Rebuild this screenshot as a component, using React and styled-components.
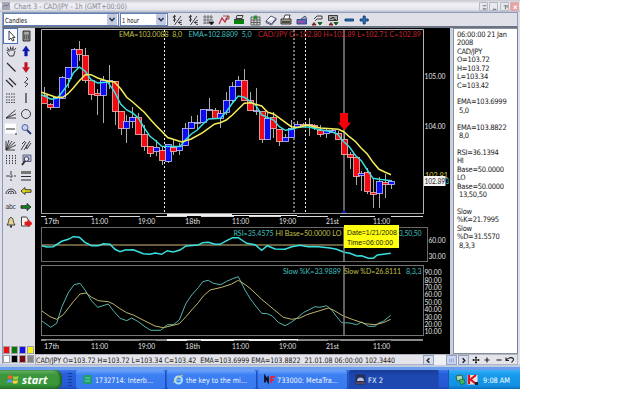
import styled, { createGlobalStyle, css } from "styled-components";

const COLORS = {
  face: "#dfe0e8",
  edge: "#8d9cb8",
  field: "#5f7fb5",
  yellow: "#f4ee5a",
  cyan: "#38e0e0",
  up: "#0c0cf0",
  down: "#f00a12",
};

const UI_FONT = '"DejaVu Sans Condensed", "DejaVu Sans", sans-serif';
const CHART_FONT = 'Lato, "Open Sans", sans-serif';

// body top, body bottom, wick top, wick bottom, direction
const CANDLES = [
  [95, 103, 87, 103, "d"], [104, 107, 103, 110, "d"], [97, 107, 97, 107, "u"],
  [77, 98, 76, 98, "u"], [67, 78, 67, 88, "u"], [49, 67, 48, 67, "u"],
  [49, 54, 41, 61, "d"], [55, 80, 48, 83, "d"], [80, 94, 80, 100, "d"],
  [93, 95, 89, 115, "d"], [80, 95, 76, 123, "u"], [80, 81, 65, 89, "u"],
  [81, 111, 81, 125, "d"], [111, 128, 111, 135, "d"], [121, 128, 115, 143, "u"],
  [117, 121, 107, 128, "u"], [117, 134, 113, 134, "d"], [134, 146, 125, 151, "d"],
  [146, 153, 146, 157, "d"], [147, 151, 140, 156, "u"], [150, 160, 147, 165, "d"],
  [144, 161, 144, 163, "u"], [147, 151, 139, 155, "d"], [146, 150, 143, 155, "u"],
  [128, 145, 123, 145, "u"], [122, 128, 116, 129, "u"], [122, 123, 115, 130, "u"],
  [109, 122, 109, 123, "u"], [109, 110, 98, 110, "u"], [110, 118, 108, 118, "d"],
  [113, 118, 110, 128, "u"], [100, 112, 92, 115, "u"], [86, 100, 82, 103, "u"],
  [80, 86, 76, 86, "u"], [80, 100, 69, 100, "d"], [100, 110, 92, 110, "d"],
  [110, 111, 88, 115, "u"], [111, 139, 111, 143, "d"], [118, 139, 113, 139, "u"],
  [117, 128, 112, 138, "d"], [129, 141, 129, 146, "d"], [137, 141, 134, 142, "u"],
  [128, 137, 120, 138, "u"], [124, 127, 121, 128, "u"], [124, 125, 123, 127, "d"],
  [124, 125, 118, 136, "d"], [125, 127, 124, 130, "d"], [130, 134, 125, 137, "d"],
  [130, 133, 129, 138, "u"], [130, 132, 129, 133, "u"], [133, 139, 131, 140, "d"],
  [139, 154, 134, 155, "d"], [154, 157, 152, 169, "d"], [157, 176, 157, 185, "d"],
  [173, 175, 171, 191, "u"], [172, 191, 168, 194, "d"], [192, 194, 178, 208, "d"],
  [181, 193, 177, 208, "u"], [182, 184, 174, 198, "d"], [181, 184, 180, 189, "u"],
];

const EMA_FAST =
  "41.5,94.7 51,99.3 57.7,98 67.7,84.7 73.3,73 79.3,67 85.3,71.3 91,79.7 97.7,83 107.7,82 114.3,91.3 120.7,104 126.7,110 132.7,113 138.3,118 144.3,128 150,136.3 155.7,140.7 161.7,146.3 180,146.5 185.3,140 191.3,134 197.3,130 202.7,124.3 208.7,119 220.3,118.3 226.3,111.7 232.3,103.3 238.3,96 244.3,97.3 250,101 256,105.7 261.7,115 273.7,120 279.3,126.7 285.3,130.3 293.3,129 298.3,127 308.7,127 320.3,129.7 332,131.7 337.7,134.3 343.7,141.7 349.3,146.7 355.7,155.7 361.3,160.7 367.3,170 373,178.3 379,179.3 385.3,180 391.3,180.7";

const EMA_SLOW =
  "41.5,92.3 56,97.3 62.7,97.3 67.7,94 73.3,88 79.3,80.7 85.3,74.7 91,74.7 97.7,78 107.7,81.3 114.3,82 120.7,88.7 126.7,97.3 132.7,102 138.3,107 144.3,112.3 150,119 155.7,125.3 161.7,131.3 167.7,137.5 181.7,142 191.3,139 202.7,132.7 214.7,124 220.3,122.7 226.3,120 232.3,115 244.3,103.3 250.7,102.7 261.7,106 267.7,112.3 273.7,114 291.3,126.7 298.3,127.5 306.7,125 320.3,128 338.3,129.3 343.7,131.7 349.3,136.7 355.7,141.7 361.3,148.3 367.3,154 373,162.3 379,169.3 385.3,172.3 391,174.7";

const RSI =
  "42,245.7 46.7,247 53.3,246.7 61.7,241.3 68.3,239.3 73.3,236.7 79.3,237.3 85,242.3 91.7,245.7 98.3,245.7 103.3,243.7 110,244.3 115,249.3 120,251.7 125,250 133.3,249.7 143.3,253.7 150,254.3 155,253 161.7,254.3 167.3,250.7 173.3,252 180,250 186,246 198.3,245 202.7,242.7 208.3,242.3 215,244.3 220,244.3 226.7,240.7 232.7,237.7 238.3,237.7 246.7,243.3 255,244.7 261.7,250.3 267.3,245.7 275,249 285,249.3 291.7,246.7 300,245.3 308.3,246.7 318.3,246.7 330,248 336.7,249.3 344,252.3 350,253.3 356.7,256 361.7,255.7 368.3,258.3 373.3,258.3 377.3,255 383.3,254.3 390.7,253.3";

const STOCH_K =
  "42,321 50.7,327.3 56.7,323.3 61.7,307.3 68.3,292.7 74,284.7 80,283.3 85,290 91.7,301 97.7,307.3 108.3,304 113.3,310.7 120,318.3 126.7,320.7 131.7,318 138.3,321.7 145,326.7 150.7,330.3 160.7,330.3 167.3,324.7 173.3,324.7 179.3,320 186,303.3 191.7,295 198.3,287.7 202.7,281.7 208.3,280.3 213.3,283.3 220.7,284.7 226.7,281.3 232.7,278.7 238.3,276.7 245,290 250,298.3 255,305 261.7,313.3 267.3,313.7 272.3,316 278.3,322.3 285,325.7 290.7,322.7 296.7,318.3 303.3,312.7 315,306.7 320,307.3 326.7,305.7 331.7,310 336.7,316.7 341.7,322.7 350,323 356.7,324.7 361.7,322 368.3,326.3 375,326.3 378.3,323.3 383.3,321.3 390.7,315.3";

const STOCH_D =
  "42,311 50,316.7 56.7,319.3 63.3,314.7 73.3,301.7 80,294 86,293 91.7,297.3 98.3,300.7 108.3,301.7 113.3,304 120,308.7 126.7,312.7 133.3,315 145,321 155,326 163.3,327.7 179.3,323.7 186,316.7 191.7,310 198.3,302.7 203.3,296 210,290 221.7,287.3 231.7,284 238.3,280.3 245,284.5 250,288.3 261.7,299.3 273.3,309 283.3,317.3 291.7,319.3 300,318 306.7,314.7 328.3,308 333.3,310 343.3,316 353.3,319.7 365,323.7 375,324.7 383.3,322.7 390.7,319.3";

const TIME_LABELS = [
  [44, 15, "17th"], [91, 17, "11:00"], [138, 17, "19:00"], [185, 15, "18th"],
  [232, 17, "11:00"], [279, 17, "19:00"], [326, 13, "21st"], [373, 17, "11:00"],
];

const READOUT = [
  "06:00:00 21 Jan", "2008", "CAD/JPY", "O=103.72", "H=103.72", "L=103.34",
  "C=103.42", "", "EMA=103.6999", " 5,0", "", "EMA=103.8822", " 8,0", "",
  "RSI=36.1394", "HI", "Base=50.0000", "LO", "Base=50.0000", " 13,50,50", "",
  "Slow", "%K=21.7995", "Slow", "%D=31.5570", " 8,3,3",
];

const PALETTE = ["#f01010", "#087808", "#1010e8", "#f4f010", "#fff", "#000", "#7c0808", "#888"];

const Label = ({ x, y, w, fill = "#e4e4e4", size = 7.5, children }) => (
  <text x={x} y={y} textLength={w} lengthAdjust="spacingAndGlyphs" fill={fill} fontSize={size}>
    {children}
  </text>
);

const TimeLabels = ({ y }) =>
  TIME_LABELS.map(([x, w, text]) => (
    <Label key={x} x={x} y={y} w={w}>
      {text}
    </Label>
  ));

const PriceChart = () => (
  <Plot $height={199} viewBox="35 28 415 199">
    <path d="M41.5 213V29.5H423.5V213" fill="none" stroke="#b4b4b4" />
    <path d="M41 213.5H424" stroke="#a0a0a0" />
    <path d="M41 216.5H46M60 216.5H93M109 216.5H140M156 216.5H187M201 216.5H234M249 216.5H281M297 216.5H328M340 216.5H375M391 216.5H423" stroke="#d8d8d8" />
    <path d="M167 215H232" stroke="#f0f0f0" strokeWidth="2" />
    <path d="M232 215.5H297" stroke="#f0f0f0" />
    <path d="M164.5 30V213M305.5 30V213" stroke="#eee" strokeDasharray="2 2" />
    <path d="M294 30V213" stroke="#777" strokeWidth="2" strokeDasharray="2 2" />
    <path d="M344 30V213" stroke="#7c7c7c" strokeWidth="1.6" />
    <path d="M341 213l3-3 3 3z" fill="#1818a0" />
    {CANDLES.map(([top, bottom, high, low, dir], i) => {
      const x = Math.round(44.2 + i * 5.875);
      return (
        <g key={i}>
          <path d={`M${x + 0.5} ${high}V${low}`} stroke="#aaa" />
          <rect
            x={x - 2.5}
            y={top + 0.5}
            width="6"
            height={Math.max(bottom - top, 0.5)}
            fill={dir === "u" ? COLORS.up : COLORS.down}
            stroke={dir === "u" ? "#c4c4f4" : "#f4bcbc"}
            strokeWidth=".8"
          />
        </g>
      );
    })}
    <path d="M41.5 30V213" stroke="#b4b4b4" />
    <polyline points={EMA_FAST} fill="none" stroke={COLORS.cyan} strokeWidth="1.5" />
    <polyline points={EMA_SLOW} fill="none" stroke={COLORS.yellow} strokeWidth="1.5" />
    <path d="M340 113h8v9.5h3l-6.5 8-6.5-8h2z" fill="#f4000a" />
    <Label x={119} y={37} w={63} fill="#c6c04c">EMA=103.0088&#160; 8,0</Label>
    <Label x={188.5} y={37} w={63} fill="#42c0c0">EMA=102.8809&#160; 5,0</Label>
    <Label x={258} y={37} w={163} fill="#c4242c">CAD/JPY O=102.80 H=102.89 L=102.71 C=102.89</Label>
    <Label x={424.5} y={78.5} w={21}>105.00</Label>
    <Label x={424.5} y={128.5} w={21}>104.00</Label>
    <Label x={425} y={177.5} w={23} fill="#d8cc40">102.91</Label>
    <Label x={446} y={184} w={3} fill={COLORS.cyan}>3</Label>
    <rect x="424" y="176" width="21.500" height="10" fill="#f4f4f4" />
    <Label x={424.5} y={183.5} w={20.5} fill="#222">102.89</Label>
    <TimeLabels y={223.5} />
  </Plot>
);

const RsiChart = () => (
  <Plot $height={37} viewBox="35 227 415 37">
    <rect x="41.5" y="227.5" width="386" height="34" fill="none" stroke="#686868" />
    <path d="M42 245H344" stroke="#8a7c50" strokeWidth="1.6" />
    <polyline points={RSI} fill="none" stroke={COLORS.cyan} strokeWidth="1.5" />
    <path d="M344 227V262" stroke="#7c7c7c" strokeWidth="1.6" />
    <Label x={233.5} y={236} w={40} fill="#42c0c0">RSI=35.4575</Label>
    <Label x={275.5} y={236} w={66} fill="#c6c04c">HI Base=50.0000 LO</Label>
    <Label x={399} y={236} w={22.5} fill="#42c0c0">3,50,50</Label>
    <Label x={428.5} y={242.5} w={17}>60.00</Label>
    <Label x={428.5} y={258.5} w={17}>30.00</Label>
  </Plot>
);

const StochasticChart = () => (
  <Plot $height={90} viewBox="35 264 415 90">
    <rect x="41.5" y="265.5" width="382" height="70" fill="none" stroke="#747474" />
    <polyline points={STOCH_K} fill="none" stroke="#55b4ae" />
    <polyline points={STOCH_D} fill="none" stroke="#bdb56c" />
    <path d="M344 265V335" stroke="#7c7c7c" strokeWidth="1.6" />
    <Label x={283} y={274} w={58} fill="#42c0c0">Slow %K=33.9889</Label>
    <Label x={344} y={274} w={57} fill="#c6c04c">Slow %D=26.8111</Label>
    <Label x={406} y={274} w={15.5} fill="#42c0c0">8,3,3</Label>
    {[90, 80, 70, 60, 50, 40, 30, 20, 10].map((value, i) => (
      <Label key={value} x={424.5} y={275.3 + i * 7.38} w={17} size={7}>{`${value}.00`}</Label>
    ))}
    <path d="M41 340H423" stroke="#8a8a8a" strokeWidth="2" />
    <path d="M167 340H298" stroke="#f0f0f0" strokeWidth="2" />
    <path d="M46 341H60M93 341H109M140 341H156M187 341H201M234 341H249M281 341H297M328 341H340M375 341H391" stroke="#000" />
    <TimeLabels y={349} />
  </Plot>
);

const TOOLS = [
  <path key="pointer" d="M4 1v9l2-2 1.500 3 1.500-.6L7.600 7.500H10z" fill="#fff" />,
  <g key="calculator"><path d="M3 1h7v10H3z" fill="#888" /><path d="M4.500 3h4" stroke="#cdd" /><path d="M4 6h5M4 8h5" strokeDasharray="1 1" /></g>,
  <path key="hand" d="M3 6L1.500 5M3.500 5L2.500 2.500M5.500 4.500V1.500M7.500 4.500l.7-3M9 5.500l2-2.500M2 7l2.500 4h4L10 6M4 7V4M6 6V3M8 6V3" />,
  <path key="buy" d="M6 1l3.500 5H7.300v5H4.700V6H2.500z" fill="#0c18a8" stroke="#0c18a8" strokeWidth=".5" />,
  <path key="line" d="M2 2l8.500 8.500" strokeWidth="1.300" />,
  <path key="sell" d="M6 11.500L2.500 6.500h2.200v-5h2.600v5h2.200z" fill="#c41420" stroke="#c41420" strokeWidth=".5" />,
  <path key="channel" d="M1 4l7 7M4 2l7 7" strokeWidth="1.200" />,
  <path key="curve" d="M6 1l2 2-3.500 3.500L8 8l-3 3" />,
  <path key="levels" d="M1 2h10M1 5h10M1 8h10M1 10.500h10" strokeDasharray="1.500 1" />,
  <path key="vertical" d="M6 1v10" strokeWidth="1.200" />,
  <path key="fan" d="M1 10L10.500 2M1 10l10-4M1 10h10" />,
  <circle key="circle" cx="6" cy="6" r="4.500" />,
  <g key="horizontal"><path d="M0 .5h11v10H0z" fill="#fff" stroke="none" /><path d="M1 6h9M10 11h2" strokeWidth="1.200" /></g>,
  <g key="zoom"><circle cx="5" cy="4.500" r="3" fill="#c4d4ec" stroke="#44549c" /><path d="M7 7l4 4" stroke="#303c80" strokeWidth="2" /></g>,
  <path key="rays" d="M1 11V2M1 11L4 1M1 11l6-9M1 11l9-8M1 11l10-5M1 11h9" />,
  <path key="pitchfork" d="M1 11l5-8M4 11l6-9M7 10l4-6M2 5l3-3M7 6L6 10" />,
  <path key="grid" d="M1.500 1v10M4.500 1v10M7.500 1v10M10.500 1v10" strokeDasharray="1.500 1" />,
  <g key="zoombox"><path d="M3 1h8v6.500H3z" fill="#b8bfe0" stroke="#50587c" /><circle cx="6.500" cy="5" r="2.300" fill="#e4e8f4" /><path d="M5 7l-3 4" strokeWidth="1.800" /></g>,
  <path key="cross" d="M6 1v10M1 6h10" strokeDasharray="4 1 2 1" />,
  <g key="weight"><path d="M1 2.500h10" stroke="#777" strokeWidth="3" /><path d="M1 6.500h10M1 10h10" strokeWidth="1.200" /></g>,
  <path key="arcs" d="M1 9a5 5 0 0 1 10 0M3 9a3 3 0 0 1 6 0M5 9a1 1 0 0 1 2 0" />,
  <path key="left" d="M1 6l4-3.500v2.200h6v2.600H5v2.200z" fill="#eadc10" />,
  null,
  <path key="right" d="M11 6L7 2.500v2.200H1v2.600h6v2.200z" fill="#108420" />,
  <g key="alert"><path d="M6 1.500C3 2 4.500 6 2 9h8C7.500 6 9 2 6 1.500z" fill="#e8d48c" /><path d="M5 10.500h2" strokeWidth="2" /></g>,
  <g key="exit"><path d="M1.500 1h5l1.500 2v7H1.500z" fill="#f8f0f0" /><path d="M12 7.500L8.500 4v2H5v3h3.500v2z" fill="#e01818" stroke="#e01818" /></g>,
];

const ToolIcon = ({ children }) => (
  <svg width="12" height="12" viewBox="0 0 12 12" fill="none" stroke="#2c2c30" strokeWidth=".9">
    {children}
  </svg>
);

const Percent = () => (
  <g>
    <path d="M5 2.500C3 1 1 3 3 4s2 3-1 2M3.500 1v7M3.500 11L10 2" />
    <path d="M11 6.500c-3.500-1-4 4.500 0 4M7 8.500h3.500" />
  </g>
);

const COMMANDS = [
  <Percent key="a" />,
  <Percent key="b" />,
  <g key="grid"><path d="M1 3h10M1 6h10M1 9h7M3 1v9M6 1v9M9 1v5" stroke="#666" /><path d="M7 8h5l-2.500 3z" fill="#000" /></g>,
  <g key="lines"><path d="M1 10l3-6 3 4 3-6" stroke="#c42838" strokeWidth="1.200" /><path d="M5 2h6v3H7" stroke="#844" /></g>,
  <g key="panel"><path d="M4 1.500h6l-1 3H3z" fill="#ddd" /><path d="M1 8h10" stroke="#08840c" strokeWidth="4" /><path d="M1 5.500h10" /></g>,
  <g key="table"><path d="M2 3h9v8H2zM2 6h9M2 8.500h9M5 3v8M8 3v8" fill="#d8d8d8" stroke="#555" /><path d="M5 1.500h3V5H5z" fill="#1c9c30" stroke="none" /></g>,
  <path key="erase" d="M1 7l5-5 5 2.500L6.500 10zM1 7v1.500l5.500 2.500L11 6V4.500" fill="#fff" stroke="#404068" />,
  <g key="print"><path d="M3.500 5L5 1h5L9 5" fill="#fff" /><path d="M1 5h10v5H1z" fill="#a8a088" /><path d="M2 8h8" strokeWidth="1.500" /></g>,
  <g key="color"><path d="M1 5.500h9.500V10H1z" fill="#5264c4" stroke="#34447c" /><path d="M5 5l4-3 2 3" fill="#9ac" stroke="#446" /><path d="M2 8h5" stroke="#d04080" strokeWidth="1.500" /></g>,
  <g key="export"><path d="M3 5l3-3h5v3H6l-2 2" fill="#ddd" /><path d="M1 11l2-2.500L5 11z" fill="#a02020" stroke="#702020" /><path d="M7 8.500h4L9 11z" fill="#107010" stroke="#105010" /></g>,
  <g key="board"><path d="M1.500 1.500h9v5h-9z" fill="#aaa" /><path d="M3 4.500h2v-1h2v2h2" /><path d="M2 11l2-2.500L6 11z" fill="#a02020" stroke="#702020" /><path d="M7 8.500h4L9 11z" fill="#107010" stroke="#105010" /></g>,
  <path key="minus" d="M2 5h8.500v2H2z" fill="#2878cc" stroke="#103868" />,
  <path key="plus" d="M5.200 2h2v3h3v2h-3v3h-2V7h-3V5h3z" fill="#2878cc" stroke="#103868" />,
];

const Chevron = () => (
  <svg width="10" height="11" viewBox="0 0 10 11">
    <rect width="10" height="11" rx="1" fill="#c4cbe0" />
    <path d="M2.500 4L5 6.700 7.500 4" fill="none" stroke="#20304c" strokeWidth="1.500" />
  </svg>
);

const App = () => (
  <>
    <GlobalStyle />
    <Screen>
      <TitleBar>
        <svg width="8" height="8" viewBox="0 0 8 8">
          <rect width="8" height="8" fill="#a8a8b4" />
          <path d="M1 5l2-2 2 1 2-2" stroke="#6878a8" fill="none" />
        </svg>
        <Caption>
          <Fit $width={113}>Chart 3 - CAD/JPY - 1h (GMT+00:00)</Fit>
        </Caption>
        <WindowButton><path d="M3 3h4M3 6.500h4" /></WindowButton>
        <WindowButton><path d="M3 7h4" /></WindowButton>
        <WindowButton><path d="M3 3h4v2M5 4v3" /></WindowButton>
        <WindowButton $close><path d="M3 3l3.500 3.500M6.500 3L3 6.500" /></WindowButton>
      </TitleBar>
      <Toolbar>
        <Select $width={116}>
          <Fit $width={22}>Candles</Fit>
          <Chevron />
        </Select>
        <Select $width={48}>
          <Fit $width={17}>1 hour</Fit>
          <Chevron />
        </Select>
        <Commands>
          {COMMANDS.map((icon, i) => (
            <ToolIcon key={i}>{icon}</ToolIcon>
          ))}
        </Commands>
      </Toolbar>
      <Workspace>
        <Toolbox>
          <Tools>
            {TOOLS.map((icon, i) => (
              <Tool key={i} $active={i === 0}>
                {icon ? <ToolIcon>{icon}</ToolIcon> : "abc"}
              </Tool>
            ))}
          </Tools>
          <Palette>
            {PALETTE.map((color) => (
              <Swatch key={color} $color={color} />
            ))}
          </Palette>
        </Toolbox>
        <Main>
          <Panes>
            <Charts>
              <PriceChart />
              <RsiChart />
              <StochasticChart />
              <Tooltip>
                <Fit $width={50}>Date=1/21/2008</Fit>
                <Fit $width={46}>Time=06:00:00</Fit>
              </Tooltip>
            </Charts>
            <Readout>
              {READOUT.map((line, i) => (
                <p key={i}>{line}</p>
              ))}
            </Readout>
          </Panes>
          <StatusBar>
            <StatusText>
              <Fit $width={359}>
                CAD/JPY O=103.72 H=103.72 L=103.34 C=103.42&#160; EMA=103.6999 EMA=103.8822&#160; 21.01.08 06:00:00 102.3440
              </Fit>
            </StatusText>
            <Scrollbar>
              <ScrollButton><path d="M6 2.500L3.500 5 6 7.500" /></ScrollButton>
              <ScrollButton $thumb><path d="M3 3v4M5 3v4M7 3v4" strokeWidth=".6" /></ScrollButton>
              <ScrollButton><path d="M4 2.500L6.500 5 4 7.500" /></ScrollButton>
            </Scrollbar>
            <StatusIcons>
              <svg viewBox="0 0 10 10"><path d="M5 1.500v7M1.500 5h7M4 2.500h2M4 7.500h2M2.500 4v2M7.500 4v2" /></svg>
              <svg viewBox="0 0 10 10"><path d="M5 2.500v5M2.500 5h5" /></svg>
              <svg viewBox="0 0 10 10"><path d="M2.500 5h5" /></svg>
              <svg viewBox="0 0 10 10"><path d="M1 2.500v3h3M1 5.500C4 1.500 9 2 8.500 5L6.500 7.500" /></svg>
            </StatusIcons>
          </StatusBar>
        </Main>
      </Workspace>
      <Taskbar>
        <StartButton>
          <svg width="12" height="11" viewBox="0 0 12 11">
            <path d="M1 2q2-1.500 4.500 0L5 5q-2-1-4.500 0z" fill="#f0602c" />
            <path d="M6.500 2q2 1.500 5 0L11 5q-2.500 1.300-5 0z" fill="#9cd440" />
            <path d="M.5 6q2-1.200 4.500 0L4.500 9Q2 8 0 9z" fill="#5c94f8" />
            <path d="M6 6q2 1.500 5 0L10.500 9q-2.500 1.500-5 0z" fill="#f8d040" />
          </svg>
          start
        </StartButton>
        <Grip />
        <Task>
          <svg viewBox="0 0 11 11"><rect x="1" y="1" width="9" height="9" rx="1" fill="#209c74" /><path d="M3 4h5M3 7h5" stroke="#70d8a8" /></svg>
          <Fit $width={58}>1732714: Interb...</Fit>
        </Task>
        <Task>
          <svg viewBox="0 0 11 11"><circle cx="5.500" cy="6" r="3.500" fill="none" stroke="#a4e0fc" strokeWidth="2" /><path d="M3 6h6" stroke="#a4e0fc" /><path d="M1 9C0 7 7 0 10 2" fill="none" stroke="#f0d060" /></svg>
          <Fit $width={61}>the key to the mi...</Fit>
        </Task>
        <Task>
          <svg viewBox="0 0 11 11"><path d="M1 8.500v-6l3 5v-5" fill="none" stroke="#101020" strokeWidth="1.800" /><path d="M7 9V3h4M7 6h3" fill="none" stroke="#d82848" strokeWidth="1.800" /></svg>
          <Fit $width={61}>733000: MetaTra...</Fit>
        </Task>
        <Task $active>
          <svg viewBox="0 0 11 11"><rect x=".5" y=".5" width="10" height="10" fill="#243058" /><path d="M2 7a3.500 3.500 0 0 1 7 0z" fill="#b4c0dc" /><path d="M1 9h9" stroke="#905868" /></svg>
          <Fit $width={15}>FX 2</Fit>
        </Task>
        <Tray>
          <svg viewBox="0 0 11 11"><path d="M1 2l6-1 1 5-6 1z" fill="#a8d8b8" stroke="#286850" /><path d="M4 6l5-1 1 4-4 2z" fill="#38b858" stroke="#185838" strokeWidth=".6" /></svg>
          <svg viewBox="0 0 11 11"><rect x=".5" y="1" width="10" height="9.500" fill="#f0e4e4" /><path d="M2 1v9M9 1L3.500 5.500 9 10" fill="none" stroke="#d8141c" strokeWidth="2.200" /><path d="M8 8h3v3H8z" fill="#222" /></svg>
          <Fit $width={27}>9:08 AM</Fit>
        </Tray>
      </Taskbar>
    </Screen>
  </>
);

export default App;

// One line of text spread over a known width
const Fit = ({ $width, children }) => (
  <FitText width={$width} height="10">
    <text x="0" y="7.600" textLength={$width} lengthAdjust="spacingAndGlyphs">
      {children}
    </text>
  </FitText>
);

const WindowButton = ({ $close, children }) => (
  <WindowButtonBox $close={$close}>
    <svg width="9" height="9" viewBox="0 0 10 10" fill="none" stroke={$close ? "#fff" : "#70747c"} strokeWidth="1.200">
      {children}
    </svg>
  </WindowButtonBox>
);

const ScrollButton = ({ $thumb, children }) => (
  <ScrollButtonBox $thumb={$thumb}>
    <svg width="9" height="9" viewBox="0 0 10 10" fill="none" stroke={$thumb ? "#6880b0" : "#181c28"} strokeWidth="1.500">
      {children}
    </svg>
  </ScrollButtonBox>
);

const GlobalStyle = createGlobalStyle`
  * {
    box-sizing: border-box;
  }

  body {
    margin: 0;
    background: #fff;
    overflow: hidden;
    font-family: ${UI_FONT};
  }

  p {
    margin: 0;
  }

  svg {
    display: block;
    flex-shrink: 0;
  }
`;

const Screen = styled.div`
  width: 520px;
  height: 389px;
  display: flex;
  flex-direction: column;
  background: ${COLORS.face};
`;

const TitleBar = styled.header`
  height: 12px;
  padding: 0 1px 0 2px;
  display: flex;
  align-items: center;
  gap: 1.5px;
  background: linear-gradient(#c8c8d2, #f2f2f6 35%, #e4e4ec 80%, #b8bcc8);
`;

const Caption = styled.h1`
  flex: 1;
  margin: 0 0 0 2px;
  color: #85868e;
  font-size: 7.5px;
  font-weight: 400;
`;

const WindowButtonBox = styled.button`
  width: 9px;
  height: 9px;
  padding: 0;
  display: grid;
  place-items: center;
  border: 1px solid ${({ $close }) => ($close ? "#e0a8a8" : "#b4b8c4")};
  border-radius: 1px;
  background: ${({ $close }) => ($close ? "#e8a4a4" : "#e8e8ee")};
`;

const Toolbar = styled.div`
  height: 16px;
  margin: 0 2px;
  display: flex;
  align-items: center;
  gap: 1px;
  border: 1px solid ${COLORS.edge};
  border-bottom: 2px solid #6c7484;
  background: ${COLORS.face};
`;

const Select = styled.div`
  width: ${({ $width }) => $width}px;
  height: 13px;
  padding: 0 1px 0 1px;
  display: flex;
  align-items: center;
  justify-content: space-between;
  border: 1px solid ${COLORS.field};
  background: #fff;
  color: #111;
  font-size: 7px;
`;

const Commands = styled.div`
  margin-left: 2px;
  display: flex;
  gap: 3.6px;
`;

const Workspace = styled.div`
  height: 339px;
  padding: 0 2px 0 2px;
  display: flex;
  border-bottom: 3px solid #c0cce0;
`;

const Toolbox = styled.aside`
  width: 33px;
  display: flex;
  flex-direction: column;
  justify-content: space-between;
  border-left: 1px solid ${COLORS.edge};
`;

const Tools = styled.div`
  display: grid;
  grid-template-columns: 15px 16px;
  grid-auto-rows: 15.55px;
`;

const Tool = styled.button`
  padding: 0;
  display: grid;
  place-items: center;
  border: 0;
  background: none;
  color: #333;
  font-family: ${UI_FONT};
  font-size: 7px;
  letter-spacing: -0.5px;

  ${({ $active }) =>
    $active &&
    css`
      border: 1px solid #4c70b0;
      background: #fbfbff;
    `}
`;

const Palette = styled.div`
  padding: 0 0 1px 0;
  display: grid;
  grid-template-columns: repeat(4, 7px);
  grid-auto-rows: 8px;
  gap: 1px;
`;

const Swatch = styled.span`
  background: ${({ $color }) => $color};
  border: 0.5px solid #a0a0a8;
`;

const Main = styled.main`
  flex: 1;
`;

const Panes = styled.div`
  height: 326px;
  display: flex;
  gap: 3px;
  background: #c8d0e0;
`;

const Charts = styled.section`
  position: relative;
  width: 415px;
  background: #000;
`;

const Plot = styled.svg`
  width: 415px;
  height: ${({ $height }) => $height}px;
  font-family: ${CHART_FONT};
`;

const Tooltip = styled.div`
  position: absolute;
  left: 309px;
  top: 197px;
  width: 55px;
  height: 23px;
  padding: 2px 3px;
  background: #ffff10;
  color: #202000;
  font-family: "Liberation Sans", sans-serif;
  font-size: 7.5px;
`;

const FitText = styled.svg`
  && {
    width: ${({ width }) => width}px;
    height: 10px;
  }
  fill: currentColor;
  overflow: visible;
`;

const Readout = styled.aside`
  flex: 1;
  padding: 2px 0 0 3px;
  border: 1px solid #8890a0;
  border-right-color: #70809c;
  background: #fff;
  color: #202020;
  font-size: 7.5px;
  line-height: 8.43px;
  letter-spacing: -0.26px;
  white-space: pre;

  p {
    height: 8.43px;
  }
`;

const StatusBar = styled.footer`
  height: 11px;
  display: flex;
  align-items: center;
  border: 1px solid #b0b4c0;
  background: #e4e4ea;
`;

const StatusText = styled.p`
  width: 387px;
  color: #181818;
  font-size: 7.5px;
`;

const Scrollbar = styled.div`
  width: 46px;
  display: flex;
  justify-content: space-between;
  background: #eef0f4;

  button:nth-child(2) {
    margin-left: 10px;
  }
`;

const ScrollButtonBox = styled.button`
  width: 11px;
  height: 10px;
  padding: 0;
  display: grid;
  place-items: center;
  border: 1px solid #94a0bc;
  background: ${({ $thumb }) => ($thumb ? "#c8d4f4" : "#d8dce8")};
`;

const StatusIcons = styled.div`
  flex: 1;
  display: flex;
  justify-content: space-evenly;

  svg {
    width: 10px;
    height: 10px;
    fill: none;
    stroke: #202020;
    stroke-width: 1.1;
  }
`;

const Taskbar = styled.nav`
  height: 22px;
  display: flex;
  border-top: 3px solid #6c9cec;
  background: linear-gradient(#3c78ec, #2860dc 20%, #2458d4 85%, #1c48b0);
`;

const StartButton = styled.button`
  width: 62px;
  padding: 0 0 1px 7px;
  display: flex;
  align-items: center;
  gap: 3px;
  border: 0;
  border-radius: 0 7px 7px 0;
  background: linear-gradient(#68b468, #3c963c 25%, #3a983a 75%, #287428);
  box-shadow: inset -2px 0 2px #206020;
  color: #fff;
  font: italic 700 11px "Open Sans", sans-serif;
`;

const Grip = styled.span`
  width: 4px;
  margin: 2px 4px 2px 6px;
  background: radial-gradient(circle, #183c98 40%, transparent 50%) 0 0 / 2px 3px;
`;

const Task = styled.button`
  width: 90px;
  margin-right: 1px;
  padding: 0 0 0 6px;
  display: flex;
  align-items: center;
  gap: 2px;
  border: 0;
  border-radius: 2px;
  background: ${({ $active }) =>
    $active ? "linear-gradient(#183c98, #1c48b0 30%)" : "linear-gradient(#6ca4fc, #3c80f4 25%, #3878ec)"};
  box-shadow: inset -1px 0 #1c50b8;
  color: #eef4ff;
  font-family: ${UI_FONT};
  font-size: 7.5px;

  svg {
    width: 11px;
    height: 11px;
  }
`;

const Tray = styled.div`
  margin-left: auto;
  width: 72px;
  padding-left: 6px;
  display: flex;
  align-items: center;
  gap: 1px;
  border-left: 1px solid #1854b0;
  background: linear-gradient(#38b0f8, #169cec 25%, #1490e4 80%, #0c70c0);
  color: #fff;
  font-size: 7.5px;

  svg {
    width: 11px;
    height: 11px;
  }

  svg:last-child {
    margin-left: 4px;
  }
`;
